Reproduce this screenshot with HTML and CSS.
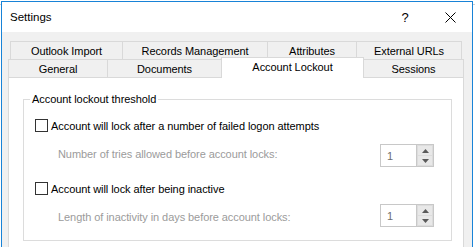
FILE: index.html
```html
<!DOCTYPE html>
<html lang="en">
<head>
    <meta charset="UTF-8">
    <title>Settings</title>
    <link rel="stylesheet" href="styles.css">
</head>
<body>
<div class="window">
    <div class="titlebar">
        <span class="title">Settings</span>
        <span class="caption-btn help">?</span>
        <span class="caption-btn close">
            <svg width="11" height="11" viewBox="0 0 11 11">
                <path d="M0.5 0.5 L10.5 10.5 M10.5 0.5 L0.5 10.5" stroke="#000" stroke-width="1" fill="none"/>
            </svg>
        </span>
    </div>
    <div class="client">
        <!-- rangée arrière des onglets -->
        <div class="tabrow back">
            <div class="tab tab-outlook">Outlook Import</div>
            <div class="tab tab-records">Records Management</div>
            <div class="tab tab-attributes">Attributes</div>
            <div class="tab tab-urls">External URLs</div>
        </div>
        <!-- rangée avant -->
        <div class="tabrow front">
            <div class="tab tab-general">General</div>
            <div class="tab tab-documents">Documents</div>
            <div class="tab tab-lockout active">Account Lockout</div>
            <div class="tab tab-sessions">Sessions</div>
        </div>
        <div class="panel">
            <div class="group">
                <div class="legend">Account lockout threshold</div>

                <label class="check-row first">
                    <input type="checkbox" class="checkbox">
                    <span>Account will lock after a number of failed logon attempts</span>
                </label>
                <div class="setting-row first">
                    <span class="setting-label">Number of tries allowed before account locks:</span>
                    <div class="spin">
                        <span class="spin-value">1</span>
                        <div class="spin-buttons">
                            <span class="spin-btn"><svg width="7" height="4" viewBox="0 0 7 4"><polygon points="0,4 3.5,0 7,4" fill="#5a5a5a"/></svg></span>
                            <span class="spin-btn"><svg width="7" height="4" viewBox="0 0 7 4"><polygon points="0,0 7,0 3.5,4" fill="#5a5a5a"/></svg></span>
                        </div>
                    </div>
                </div>

                <label class="check-row second">
                    <input type="checkbox" class="checkbox">
                    <span>Account will lock after being inactive</span>
                </label>
                <div class="setting-row second">
                    <span class="setting-label">Length of inactivity in days before account locks:</span>
                    <div class="spin">
                        <span class="spin-value">1</span>
                        <div class="spin-buttons">
                            <span class="spin-btn"><svg width="7" height="4" viewBox="0 0 7 4"><polygon points="0,4 3.5,0 7,4" fill="#5a5a5a"/></svg></span>
                            <span class="spin-btn"><svg width="7" height="4" viewBox="0 0 7 4"><polygon points="0,0 7,0 3.5,4" fill="#5a5a5a"/></svg></span>
                        </div>
                    </div>
                </div>
            </div>
        </div>
    </div>
</div>
</body>
</html>
```

FILE: styles.css
```css
body {
    margin: 0;
    width: 475px;
    height: 247px;
    overflow: hidden;
    background: linear-gradient(#fff 4px, #cfcfcf 4px, #cfcfcf 5px, #fff 5px);
    font-family: "Liberation Sans", Arial, sans-serif;
    font-size: 11px;
    letter-spacing: -0.07px;
    color: #000;
}

.window {
    margin: 1px 0 0 1px;
    width: 472px;
    height: 260px;
    box-sizing: border-box;
    border: 1px solid #1883d7;
    border-bottom: none;
    background: #f0f0f0;
}

/* Barre de titre */
.titlebar {
    display: flex;
    align-items: center;
    height: 30px;
    background: #fff;
}

.title {
    flex: 1;
    padding-left: 8px;
    font-size: 11.5px;
    letter-spacing: 0;
}

.caption-btn {
    width: 46px;
    height: 30px;
    display: flex;
    align-items: center;
    justify-content: center;
}

.help {
    font-size: 13px;
    padding-left: 4px;
    box-sizing: border-box;
}

.close {
    padding-left: 2px;
    box-sizing: border-box;
}

/* Onglets */
.client {
    padding: 9px 8px 0 6px;
}

.tabrow {
    display: flex;
    height: 18px;
}

.tabrow.back {
    margin-left: 2px;
}

.tab {
    box-sizing: border-box;
    height: 18px;
    border: 1px solid #d9d9d9;
    border-bottom: none;
    border-right: none;
    background: #f0f0f0;
    display: flex;
    align-items: center;
    justify-content: center;
}

.tab:last-child {
    border-right: 1px solid #d9d9d9;
}

.tab.active {
    position: relative;
    z-index: 1;
    height: 21px;
    margin-top: -2px;
    padding-bottom: 2px;
    background: #fff;
    border-right: 1px solid #d9d9d9;
}

.tab.active + .tab {
    border-left: none;
}

.tab-outlook { width: 112px; }
.tab-records { width: 145px; }
.tab-attributes { width: 89px; }
.tab-urls { width: 106px; }
.tab-general { width: 99px; }
.tab-documents { width: 114px; }
.tab-lockout { width: 143px; }
.tab-sessions { width: 100px; }

.panel {
    height: 200px;
    padding: 21px 11px 0 14px;
    background: #fff;
    border: 1px solid #d9d9d9;
}

/* Cadre de groupe */
.group {
    display: flex;
    flex-direction: column;
    padding-bottom: 13px;
    border: 1px solid #dcdcdc;
}

.legend {
    align-self: flex-start;
    margin: -9px 0 0 6px;
    padding: 0 2px;
    line-height: 16px;
    background: #fff;
}

.check-row {
    display: flex;
    align-items: center;
    gap: 3px;
    height: 17px;
    padding-left: 11px;
}

.check-row.first { margin-top: 10px; }
.check-row.second { margin-top: 13px; }

.checkbox {
    appearance: none;
    margin: 0;
    width: 13px;
    height: 13px;
    border: 1px solid #333;
    background: #fff;
}

.setting-row {
    display: flex;
    align-items: center;
    justify-content: space-between;
    height: 23px;
    padding: 0 17px 0 34px;
}

.setting-row.first { margin-top: 10px; }
.setting-row.second { margin-top: 7px; }

.setting-label {
    color: #9b9b9b;
}

.setting-row.first .setting-label {
    padding-bottom: 4px;
}

.setting-row.second .setting-label {
    padding-top: 2px;
}

/* Champ numérique */
.spin {
    display: flex;
    width: 54px;
    height: 23px;
    box-sizing: border-box;
    border: 1px solid #c8c8c8;
    background: #fff;
}

.spin-value {
    flex: 1;
    display: flex;
    align-items: center;
    padding-left: 6px;
    color: #6d6d6d;
}

.spin-buttons {
    width: 17px;
    box-sizing: border-box;
    display: flex;
    flex-direction: column;
    gap: 1px;
    padding: 1px;
    border-left: 1px solid #c8c8c8;
    background: #dcdcdc;
}

.spin-btn {
    flex: 1;
    display: flex;
    align-items: center;
    justify-content: center;
    background: #e8e8e8;
}
```
